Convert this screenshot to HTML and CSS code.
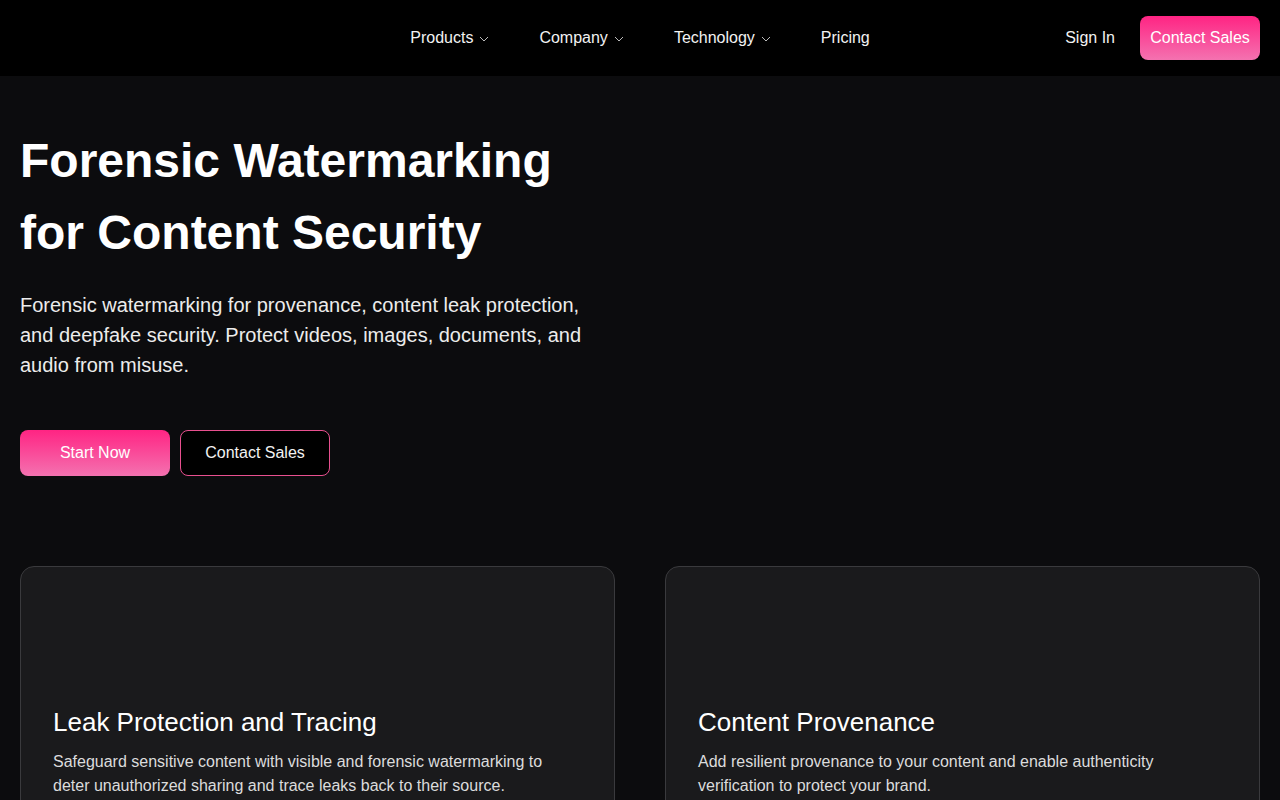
FILE: index.html
```html
<!DOCTYPE html>
<html lang="en">
<head>
    <meta charset="UTF-8">
    <meta name="viewport" content="width=device-width, initial-scale=1.0">
    <title>Forensic Watermarking for Content Security</title>
    <link rel="stylesheet" href="styles.css">
</head>
<body>

    <!-- Top Navigation -->
    <header class="site-header">
        <a class="logo" href="#" aria-label="Home"></a>

        <nav class="main-nav">
            <a class="nav-link" href="#">Products
                <svg class="chevron" viewBox="0 0 10 6" width="10" height="6"><path d="M1 1l4 4 4-4" /></svg>
            </a>
            <a class="nav-link" href="#">Company
                <svg class="chevron" viewBox="0 0 10 6" width="10" height="6"><path d="M1 1l4 4 4-4" /></svg>
            </a>
            <a class="nav-link" href="#">Technology
                <svg class="chevron" viewBox="0 0 10 6" width="10" height="6"><path d="M1 1l4 4 4-4" /></svg>
            </a>
            <a class="nav-link" href="#">Pricing</a>
        </nav>

        <div class="header-actions">
            <a class="sign-in" href="#">Sign In</a>
            <a class="btn btn-primary btn-small" href="#">Contact Sales</a>
        </div>
    </header>

    <main>
        <!-- Hero -->
        <section class="hero">
            <h1>Forensic Watermarking<br>for Content Security</h1>
            <p class="hero-text">Forensic watermarking for provenance, content leak protection, and deepfake security. Protect videos, images, documents, and audio from misuse.</p>
            <div class="hero-buttons">
                <a class="btn btn-primary" href="#">Start Now</a>
                <a class="btn btn-outline" href="#">Contact Sales</a>
            </div>
        </section>

        <!-- Feature Cards -->
        <section class="features">
            <div class="card">
                <div class="card-media"></div>
                <h3>Leak Protection and Tracing</h3>
                <p>Safeguard sensitive content with visible and forensic watermarking to deter unauthorized sharing and trace leaks back to their source.</p>
            </div>
            <div class="card">
                <div class="card-media"></div>
                <h3>Content Provenance</h3>
                <p>Add resilient provenance to your content and enable authenticity verification to protect your brand.</p>
            </div>
        </section>
    </main>

</body>
</html>
```

FILE: styles.css
```css
/* General Styles */
* {
    box-sizing: border-box;
}

body {
    margin: 0;
    font-family: "Liberation Sans", Arial, sans-serif;
    background-color: #0c0c0e;
    color: #fff;
}

a {
    color: inherit;
    text-decoration: none;
}

/* Header */
.site-header {
    display: grid;
    grid-template-columns: 1fr auto 1fr;
    align-items: center;
    height: 76px;
    padding: 0 20px;
    background-color: #000;
}

.main-nav {
    display: flex;
    align-items: center;
    gap: 50px;
}

.nav-link {
    display: flex;
    align-items: center;
    gap: 6px;
    font-size: 16px;
    line-height: 20px;
    color: #f2f2f2;
}

.chevron {
    margin-top: 2px;
    fill: none;
    stroke: #bbb;
    stroke-width: 1;
}

.header-actions {
    display: flex;
    justify-content: flex-end;
    align-items: center;
    gap: 25px;
}

.sign-in {
    font-size: 16px;
    color: #f2f2f2;
}

/* Buttons */
.btn {
    display: inline-flex;
    align-items: center;
    justify-content: center;
    width: 150px;
    height: 46px;
    border-radius: 8px;
    font-size: 16px;
    color: #fff;
}

.btn-primary {
    background: linear-gradient(180deg, #ff2483 0%, #f472b0 100%);
}

.btn-small {
    width: 120px;
    height: 44px;
    font-size: 16px;
}

.btn-outline {
    background-color: #000;
    border: 1px solid #e8508f;
    color: #f2f2f2;
}

/* Hero */
.hero {
    padding: 49px 20px 0;
}

.hero h1 {
    margin: 0;
    font-size: 48px;
    line-height: 72px;
    font-weight: bold;
}

.hero-text {
    max-width: 580px;
    margin: 21px 0 0;
    font-size: 20px;
    line-height: 30px;
    color: #ececec;
}

.hero-buttons {
    display: flex;
    gap: 10px;
    margin-top: 50px;
}

/* Feature Cards */
.features {
    display: grid;
    grid-template-columns: 1fr 1fr;
    gap: 50px;
    padding: 90px 20px 0;
}

.card {
    padding: 32px;
    background-color: #1a1a1c;
    border: 1px solid #3a3a3d;
    border-radius: 14px;
}

.card-media {
    height: 105px;
}

.card h3 {
    margin: 0;
    font-size: 26px;
    line-height: 36px;
    font-weight: normal;
}

.card p {
    margin: 10px 0 0;
    font-size: 16px;
    line-height: 24px;
    color: #dcdcdc;
}
```
